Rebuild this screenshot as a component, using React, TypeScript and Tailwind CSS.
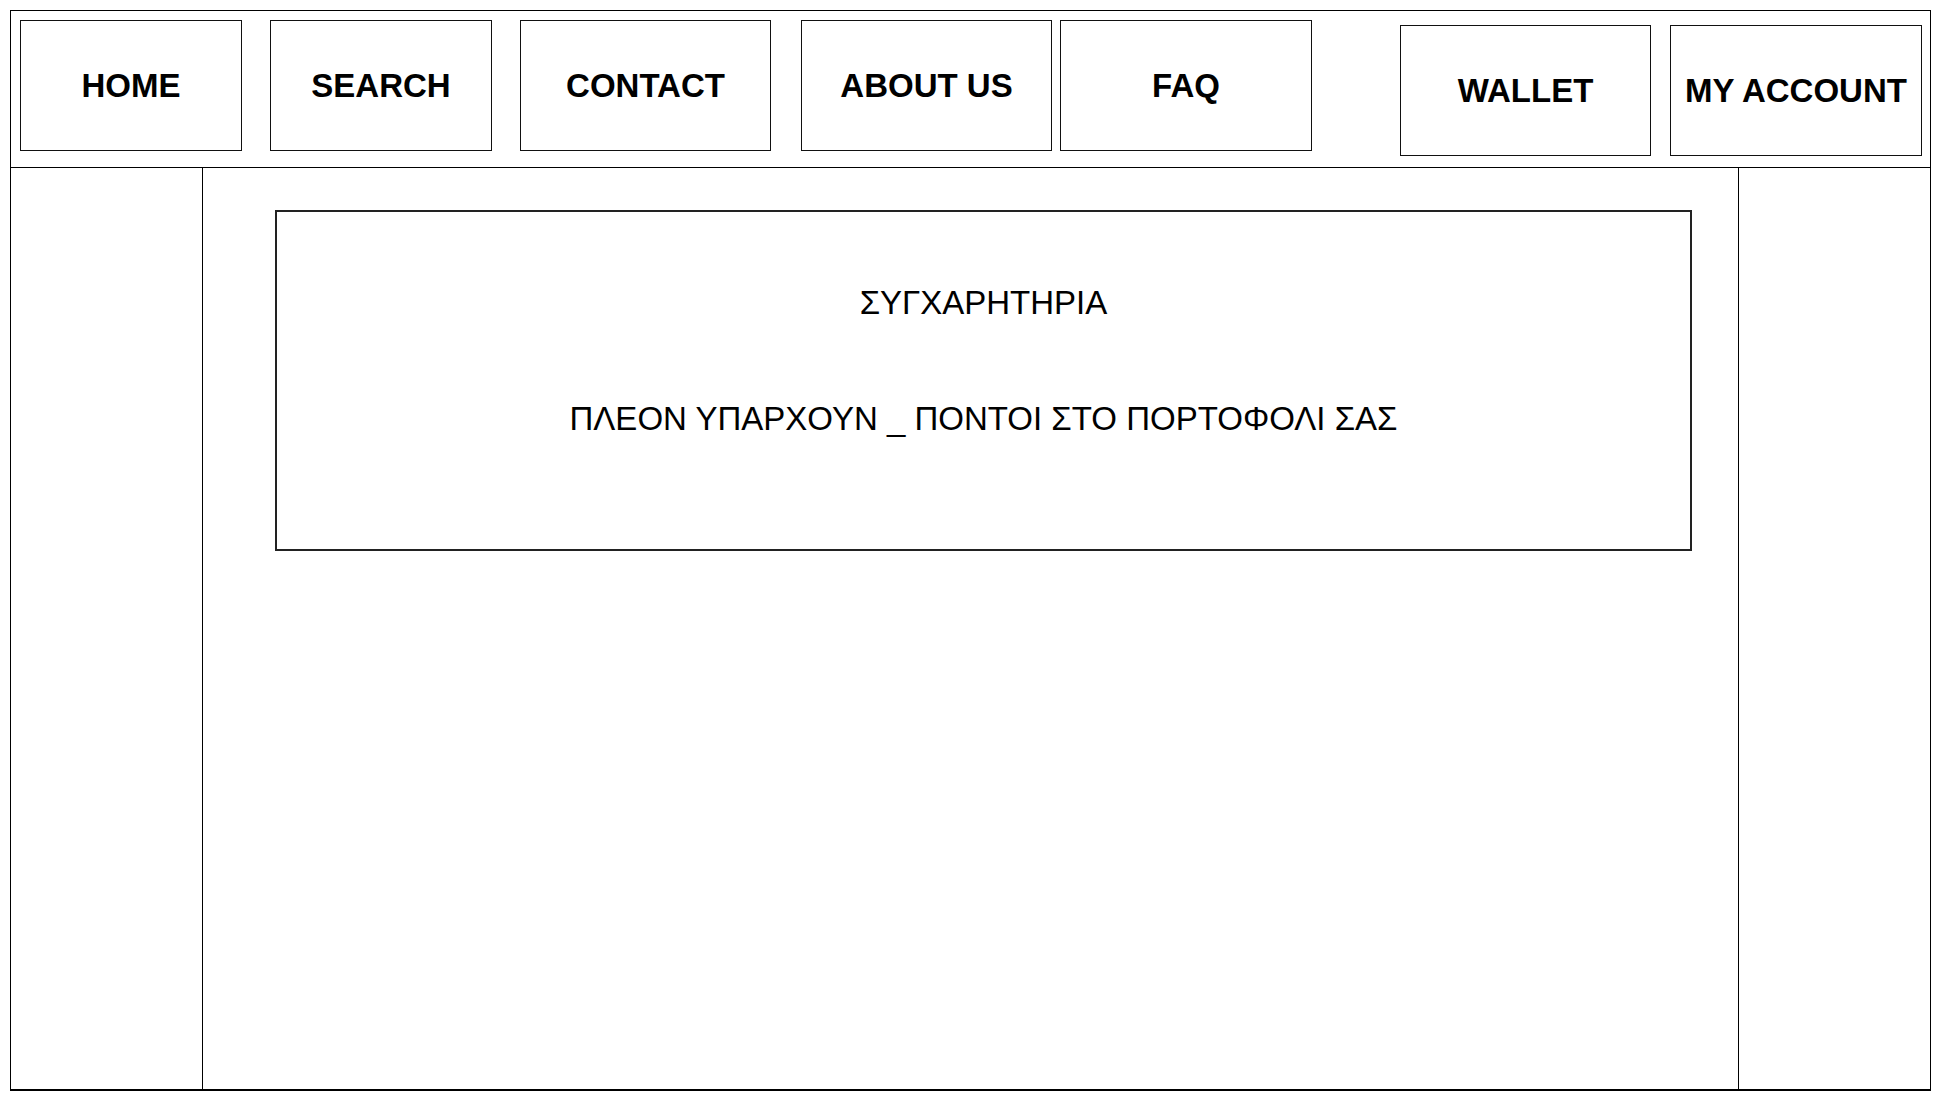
import React from 'react';

const LEFT_NAV = [
  { label: 'HOME', cls: 'w-[222px]' },
  { label: 'SEARCH', cls: 'w-[222px] ml-[28px]' },
  { label: 'CONTACT', cls: 'w-[251px] ml-[28px]' },
  { label: 'ABOUT US', cls: 'w-[251px] ml-[30px]' },
  { label: 'FAQ', cls: 'w-[252px] ml-[8px]' },
];

function NavBox({ label, className }: { label: string; className: string }) {
  return (
    <div className={`h-[131px] border border-[#111] flex items-center justify-center text-[33px] font-bold text-black ${className}`}>
      {label}
    </div>
  );
}

export default function App() {
  return (
    <div className="min-h-screen bg-white p-[10px]" style={{ fontFamily: '"Liberation Sans", Arial, sans-serif' }}>
      <div className="w-[1921px] h-[1081px] border border-b-2 border-black flex flex-col">
        {/* top nav */}
        <div className="h-[157px] border-b border-black flex items-start pl-[9px] pr-[8px] pt-[9px] shrink-0">
          {LEFT_NAV.map(n => (
            <NavBox key={n.label} label={n.label} className={n.cls} />
          ))}
          <div className="ml-auto flex mt-[5px]">
            <NavBox label="WALLET" className="w-[251px]" />
            <NavBox label="MY ACCOUNT" className="w-[252px] ml-[19px]" />
          </div>
        </div>

        {/* body */}
        <div className="flex-1 flex">
          <div className="w-[192px] border-r border-black shrink-0" />
          <div className="flex-1 pt-[42px] pl-[72px] pr-[46px]">
            <div className="h-[341px] border-2 border-[#222] pt-[72px] text-center text-[33px] leading-[37px] text-black">
              <div>ΣΥΓΧΑΡΗΤΗΡΙΑ</div>
              <div className="mt-[79px]">ΠΛΕΟΝ ΥΠΑΡΧΟΥΝ _ ΠΟΝΤΟΙ ΣΤΟ ΠΟΡΤΟΦΟΛΙ ΣΑΣ</div>
            </div>
          </div>
          <div className="w-[192px] border-l border-black shrink-0" />
        </div>
      </div>
    </div>
  );
}
